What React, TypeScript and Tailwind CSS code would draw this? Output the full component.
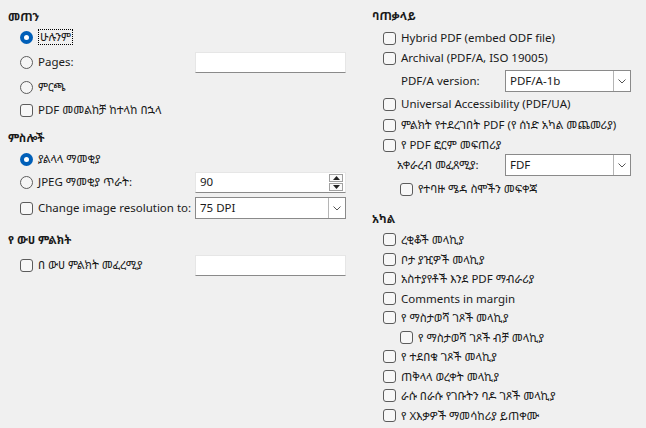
import React from "react";

const font = { fontFamily: '"Noto Sans", "Noto Sans Ethiopic", "DejaVu Sans", sans-serif' };

function Radio({ checked }: { checked?: boolean }) {
  return checked ? (
    <span className="w-[13px] h-[13px] rounded-full bg-[#005fb8] flex items-center justify-center shrink-0">
      <span className="w-[5px] h-[5px] rounded-full bg-white" />
    </span>
  ) : (
    <span className="w-[13px] h-[13px] rounded-full border border-[#5c5c5c] bg-[#f5f5f5] shrink-0" />
  );
}

function Check() {
  return <span className="w-[13px] h-[13px] rounded-[3px] border border-[#5c5c5c] bg-[#f7f7f7] shrink-0" />;
}

function TextBox({ value }: { value?: string }) {
  return (
    <div className="w-[151px] h-[21px] shrink-0 bg-white border border-[#e6e6e6] border-b-[#8a8a8a] flex items-center px-[4px]">
      {value}
    </div>
  );
}

function Spin({ value }: { value: string }) {
  return (
    <div className="w-[151px] h-[21px] shrink-0 bg-white border border-[#e6e6e6] border-b-[#8a8a8a] flex items-center">
      <span className="flex-1 px-[4px]">{value}</span>
      <div className="flex flex-col mr-[2px] gap-[1px]">
        <span className="w-[14px] h-[8px] border border-[#a0a0a0] bg-[#fafafa] flex items-center justify-center">
          <svg width="7" height="4" viewBox="0 0 7 4"><path d="M0 4 L3.5 0 L7 4 Z" fill="#222" /></svg>
        </span>
        <span className="w-[14px] h-[8px] border border-[#a0a0a0] bg-[#fafafa] flex items-center justify-center">
          <svg width="7" height="4" viewBox="0 0 7 4"><path d="M0 0 L3.5 4 L7 0 Z" fill="#222" /></svg>
        </span>
      </div>
    </div>
  );
}

function Combo({ value, w }: { value: string; w: string }) {
  return (
    <div className={`${w} h-[22px] shrink-0 bg-white border border-[#8a8a8a] flex items-center`}>
      <span className="flex-1 px-[4px]">{value}</span>
      <span className="w-[17px] h-[20px] border-l border-[#b5b5b5] bg-white flex items-center justify-center">
        <svg width="8" height="5" viewBox="0 0 8 5"><path d="M0.5 0.5 L4 4 L7.5 0.5" stroke="#555" fill="none" /></svg>
      </span>
    </div>
  );
}

function Heading({ children, className }: { children: React.ReactNode; className?: string }) {
  return <div className={`h-[18px] flex items-center font-bold ${className ?? ""}`}>{children}</div>;
}

function Row({ children, className }: { children: React.ReactNode; className?: string }) {
  return <div className={`flex items-center gap-[5px] ${className ?? ""}`}>{children}</div>;
}

export default function App() {
  const structure = [
    "ረቂቆች መላኪያ",
    "ቦታ ያዢዎች መላኪያ",
    "አስተያየቶች እንደ PDF ማብራሪያ",
    "Comments in margin",
    "የ ማስታወሻ ገጾች መላኪያ",
    "የ ማስታወሻ ገጾች ብቻ መላኪያ",
    "የ ተደበቁ ገጾች መላኪያ",
    "ጠቅላላ ወረቀት መላኪያ",
    "ራሱ በራሱ የገቡትን ባዶ ገጾች መላኪያ",
    "የ Xእቃዎች ማመሳከሪያ ይጠቀሙ",
  ];

  return (
    <div className="w-[646px] h-[428px] bg-[#f0f0f0] text-[#1a1a1a] text-[11.5px] flex overflow-hidden" style={font}>
      {/* left column */}
      <div className="w-[364px] pl-[8px] flex flex-col">
        <Heading className="mt-[8px]">መጠን</Heading>
        <Row className="h-[22px] pl-[12px]">
          <Radio checked />
          <span className="border border-dotted border-black px-[1px] leading-[14px]">ሁሉንም</span>
        </Row>
        <Row className="h-[22px] pl-[12px] mt-[3px]">
          <Radio />
          <span className="w-[152px]">Pages:</span>
          <TextBox />
        </Row>
        <Row className="h-[22px] pl-[12px] mt-[3px]">
          <Radio />
          <span>ምርጫ</span>
        </Row>
        <Row className="h-[22px] pl-[12px] mt-[1px]">
          <Check />
          <span>PDF መመልከቻ ከተላከ በኋላ</span>
        </Row>

        <Heading className="mt-[8px]">ምስሎች</Heading>
        <Row className="h-[22px] pl-[12px] mt-[1px]">
          <Radio checked />
          <span>ያልላላ ማመቂያ</span>
        </Row>
        <Row className="h-[22px] pl-[12px] mt-[1px]">
          <Radio />
          <span className="w-[152px]">JPEG ማመቂያ  ጥራት:</span>
          <Spin value="90" />
        </Row>
        <Row className="h-[22px] pl-[12px] mt-[4px]">
          <Check />
          <span className="w-[152px] whitespace-nowrap">Change image resolution to:</span>
          <Combo value="75 DPI" w="w-[151px]" />
        </Row>

        <Heading className="mt-[12px]">የ ውሀ ምልክት</Heading>
        <Row className="h-[22px] pl-[12px] mt-[5px]">
          <Check />
          <span className="w-[152px]">በ ውሀ ምልክት መፈረሚያ</span>
          <TextBox />
        </Row>
      </div>

      {/* right column */}
      <div className="flex-1 pl-[8px] flex flex-col">
        <Heading className="mt-[7px]">ባጠቃላይ</Heading>
        <div className="pl-[11px] flex flex-col">
          <Row className="h-[20px] mt-[3px]">
            <Check />
            <span>Hybrid PDF (embed ODF file)</span>
          </Row>
          <Row className="h-[20px]">
            <Check />
            <span>Archival (PDF/A, ISO 19005)</span>
          </Row>
          <div className="h-[22px] mt-[2px] pl-[18px] flex items-center">
            <span className="w-[104px]">PDF/A version:</span>
            <Combo value="PDF/A-1b" w="w-[126px]" />
          </div>
          <Row className="h-[20px] mt-[2px]">
            <Check />
            <span>Universal Accessibility (PDF/UA)</span>
          </Row>
          <Row className="h-[20px] mt-[1px]">
            <Check />
            <span>ምልክት የተደረገበት PDF (የ ሰነድ አካል መጨመሪያ)</span>
          </Row>
          <Row className="h-[20px]">
            <Check />
            <span>የ PDF ፎርም መፍጠሪያ</span>
          </Row>
          <div className="h-[22px] mt-[-1px] pl-[14px] flex items-center">
            <span className="w-[108px]">አቀራረብ መፈጸሚያ:</span>
            <Combo value="FDF" w="w-[126px]" />
          </div>
          <Row className="h-[20px] mt-[3px] pl-[17px]">
            <Check />
            <span>የተባዙ ሜዳ ስሞችን መፍቀጃ</span>
          </Row>
        </div>

        <Heading className="mt-[11px]">አካል</Heading>
        <div className="pl-[11px] mt-[2px] flex flex-col">
          {structure.map((s, i) => (
            <Row key={s} className={`h-[19.5px] ${i === 5 ? "pl-[17px]" : ""}`}>
              <Check />
              <span>{s}</span>
            </Row>
          ))}
        </div>
      </div>
    </div>
  );
}
